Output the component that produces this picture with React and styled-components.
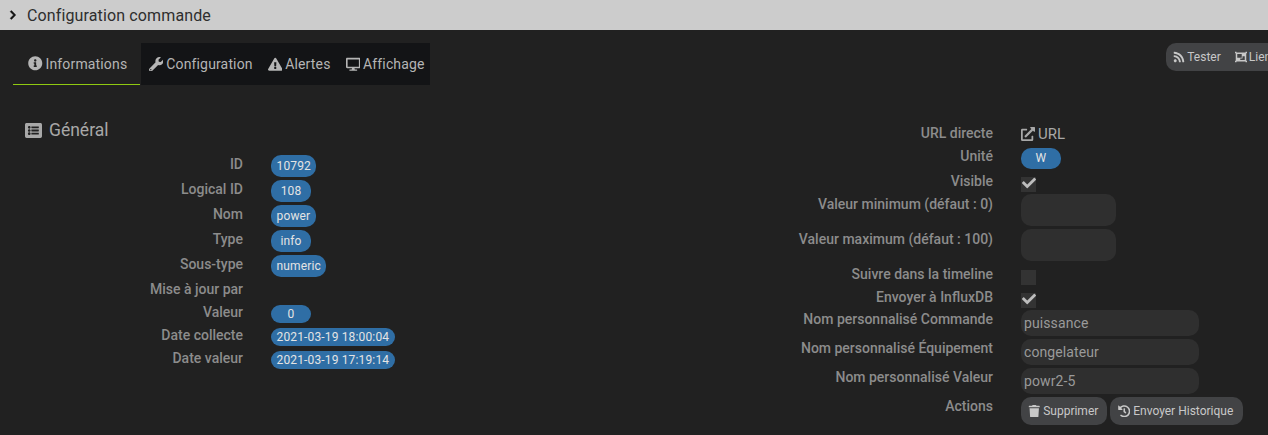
import React from "react";
import styled, { createGlobalStyle } from "styled-components";
import {
  FaChevronRight,
  FaInfoCircle,
  FaWrench,
  FaExclamationTriangle,
  FaDesktop,
  FaListAlt,
  FaExternalLinkAlt,
  FaCheck,
  FaTrash,
  FaHistory,
  FaRss,
  FaObjectGroup,
} from "react-icons/fa";

const GlobalStyle = createGlobalStyle`
  html, body {
    margin: 0;
    padding: 0;
    height: 435px;
    overflow: hidden;
    background: #212121;
    font-family: Roboto, "Liberation Sans", sans-serif;
  }
`;

const Page = styled.div`
  width: 1268px;
  height: 435px;
  overflow: hidden;
`;

const Header = styled.div`
  height: 30px;
  background: #cccccc;
  color: #2e2e2e;
  display: flex;
  align-items: center;
  padding-left: 8px;
  gap: 9px;
  font-size: 16px;
  letter-spacing: 0.13px;
  svg {
    font-size: 10px;
    color: #111;
    stroke: #111;
    stroke-width: 30px;
  }
`;

const TabRow = styled.div`
  display: flex;
  align-items: flex-start;
  padding: 13px 0 0 13px;
  height: 42px;
`;

const Tab = styled.div`
  height: 42px;
  box-sizing: border-box;
  display: flex;
  align-items: center;
  gap: 3px;
  flex-shrink: 0;
  font-size: 14px;
  letter-spacing: 0.15px;
  color: #b5b5b5;
  padding: ${(p) => p.$pad || "0 7.5px"};
  border-bottom: ${(p) => (p.$active ? "1px solid #8fc911" : "none")};
  margin-right: ${(p) => (p.$active ? "1px" : "0")};
  svg {
    font-size: 14.5px;
  }
`;

const TabStrip = styled.div`
  display: flex;
  background: #131416;
  height: 42px;
  width: 289px;
`;

const ButtonGroup = styled.div`
  display: flex;
  flex-shrink: 0;
  margin-left: 736px;
  height: 28px;
  background: #424345;
  border-radius: 10px 0 0 10px;
  color: #c8c8c8;
  font-size: 12px;
  align-items: center;
  padding-left: 7px;
  gap: 14px;
`;

const GroupItem = styled.span`
  display: flex;
  align-items: center;
  gap: 2px;
  svg {
    font-size: 12px;
  }
`;

const Columns = styled.div`
  display: grid;
  grid-template-columns: 750px 518px;
  padding-top: 30px;
`;

const Column = styled.div`
  padding-top: ${(p) => p.$top || 0}px;
`;

const SectionTitle = styled.div`
  height: 39px;
  box-sizing: border-box;
  padding: 6px 0 0 25px;
  display: flex;
  align-items: flex-start;
  gap: 7px;
  font-size: 17.5px;
  line-height: 19px;
  color: #a8a8a8;
  svg {
    font-size: 17px;
    margin-top: 1px;
  }
`;

const Row = styled.div`
  display: grid;
  grid-template-columns: 243px 1fr;
  column-gap: 28px;
  height: ${(p) => p.$h}px;
  align-items: start;
`;

const Label = styled.div`
  text-align: right;
  font-size: 14px;
  line-height: 18px;
  font-weight: 500;
  color: #8c8c8c;
  padding-top: ${(p) => p.$top || 0}px;
`;

const Pill = styled.span`
  display: inline-block;
  box-sizing: border-box;
  min-width: ${(p) => p.$min || 40}px;
  height: ${(p) => p.$h || 22}px;
  line-height: ${(p) => p.$h || 22}px;
  margin-top: ${(p) => p.$top || 0}px;
  padding: 0 5.5px;
  text-align: center;
  background: #2f6ea5;
  color: #e4e4e4;
  font-size: 12px;
  letter-spacing: 0.15px;
  border-radius: 10px;
`;

const UrlLink = styled.span`
  display: flex;
  align-items: center;
  gap: 3px;
  height: 20px;
  font-size: 15px;
  color: #a8a8a8;
  svg {
    font-size: 14px;
  }
`;

const Check = styled.span`
  display: flex;
  align-items: center;
  justify-content: center;
  width: 15px;
  height: 15px;
  margin-top: ${(p) => p.$top || 0}px;
  background: #333333;
  color: #bdbdbd;
  svg {
    font-size: 14px;
    margin-top: -3px;
  }
`;

const Field = styled.div`
  box-sizing: border-box;
  width: ${(p) => p.$w}px;
  height: ${(p) => p.$h}px;
  padding-left: 3px;
  background: #2f2f2f;
  border-radius: 10px;
  font-size: 14px;
  letter-spacing: 0.1px;
  line-height: ${(p) => p.$h}px;
  color: #9a9a9a;
`;

const Actions = styled.div`
  display: flex;
  gap: 3px;
`;

const ActionButton = styled.div`
  display: flex;
  align-items: center;
  justify-content: center;
  gap: 3px;
  height: 28px;
  box-sizing: border-box;
  padding-right: 2px;
  width: ${(p) => p.$w}px;
  background: #424345;
  border-radius: 10px;
  color: #c8c8c8;
  font-size: 12px;
  svg {
    font-size: 12.5px;
  }
`;

const general = [
  { label: "ID", value: "10792", h: 25, top: 1, labelTop: 1 },
  { label: "Logical ID", value: "108", h: 25, top: 1, labelTop: 1 },
  { label: "Nom", value: "power", h: 25, top: 1, labelTop: 1 },
  { label: "Type", value: "info", h: 25, top: 1, labelTop: 1 },
  { label: "Sous-type", value: "numeric", h: 25, top: 1, labelTop: 1 },
  { label: "Mise à jour par", h: 24, labelTop: 1 },
  { label: "Valeur", value: "0", h: 23, pill: 18, top: 1 },
  { label: "Date collecte", value: "2021-03-19 18:00:04", h: 23, pill: 18, top: 1 },
  { label: "Date valeur", value: "2021-03-19 17:19:14", h: 23, pill: 18, top: 1 },
];

export default function App() {
  return (
    <Page>
      <GlobalStyle />
      <Header>
        <FaChevronRight />
        <span>Configuration commande</span>
      </Header>
      <TabRow>
        <Tab $active $pad="0 13px 0 15px">
          <FaInfoCircle />
          Informations
        </Tab>
        <TabStrip>
          <Tab>
            <FaWrench />
            Configuration
          </Tab>
          <Tab>
            <FaExclamationTriangle />
            Alertes
          </Tab>
          <Tab>
            <FaDesktop />
            Affichage
          </Tab>
        </TabStrip>
        <ButtonGroup>
          <GroupItem>
            <FaRss />
            Tester
          </GroupItem>
          <GroupItem>
            <FaObjectGroup />
            Liens
          </GroupItem>
        </ButtonGroup>
      </TabRow>
      <Columns>
        <Column>
          <SectionTitle>
            <FaListAlt />
            Général
          </SectionTitle>
          {general.map((row) => (
            <Row key={row.label} $h={row.h}>
              <Label $top={row.labelTop}>{row.label}</Label>
              <div>
                {row.value && (
                  <Pill $h={row.pill} $top={row.top}>
                    {row.value}
                  </Pill>
                )}
              </div>
            </Row>
          ))}
        </Column>
        <Column $top={9}>
          <Row $h={23}>
            <Label>URL directe</Label>
            <UrlLink>
              <FaExternalLinkAlt />
              URL
            </UrlLink>
          </Row>
          <Row $h={25}>
            <Label>Unité</Label>
            <div>
              <Pill $h={21}>W</Pill>
            </div>
          </Row>
          <Row $h={22}>
            <Label>Visible</Label>
            <Check $top={5}>
              <FaCheck />
            </Check>
          </Row>
          <Row $h={35}>
            <Label $top={1}>Valeur minimum (défaut : 0)</Label>
            <Field $w={95} $h={32} />
          </Row>
          <Row $h={35}>
            <Label $top={1}>Valeur maximum (défaut : 100)</Label>
            <Field $w={95} $h={32} />
          </Row>
          <Row $h={23}>
            <Label $top={1}>Suivre dans la timeline</Label>
            <Check $top={6} />
          </Row>
          <Row $h={23}>
            <Label $top={1}>Envoyer à InfluxDB</Label>
            <Check $top={6}>
              <FaCheck />
            </Check>
          </Row>
          <Row $h={29}>
            <Label>Nom personnalisé Commande</Label>
            <Field $w={178} $h={26}>puissance</Field>
          </Row>
          <Row $h={29}>
            <Label>Nom personnalisé Équipement</Label>
            <Field $w={178} $h={26}>congelateur</Field>
          </Row>
          <Row $h={29}>
            <Label>Nom personnalisé Valeur</Label>
            <Field $w={178} $h={26}>powr2-5</Field>
          </Row>
          <Row $h={28}>
            <Label>Actions</Label>
            <Actions>
              <ActionButton $w={86}>
                <FaTrash />
                Supprimer
              </ActionButton>
              <ActionButton $w={133}>
                <FaHistory />
                Envoyer Historique
              </ActionButton>
            </Actions>
          </Row>
        </Column>
      </Columns>
    </Page>
  );
}
